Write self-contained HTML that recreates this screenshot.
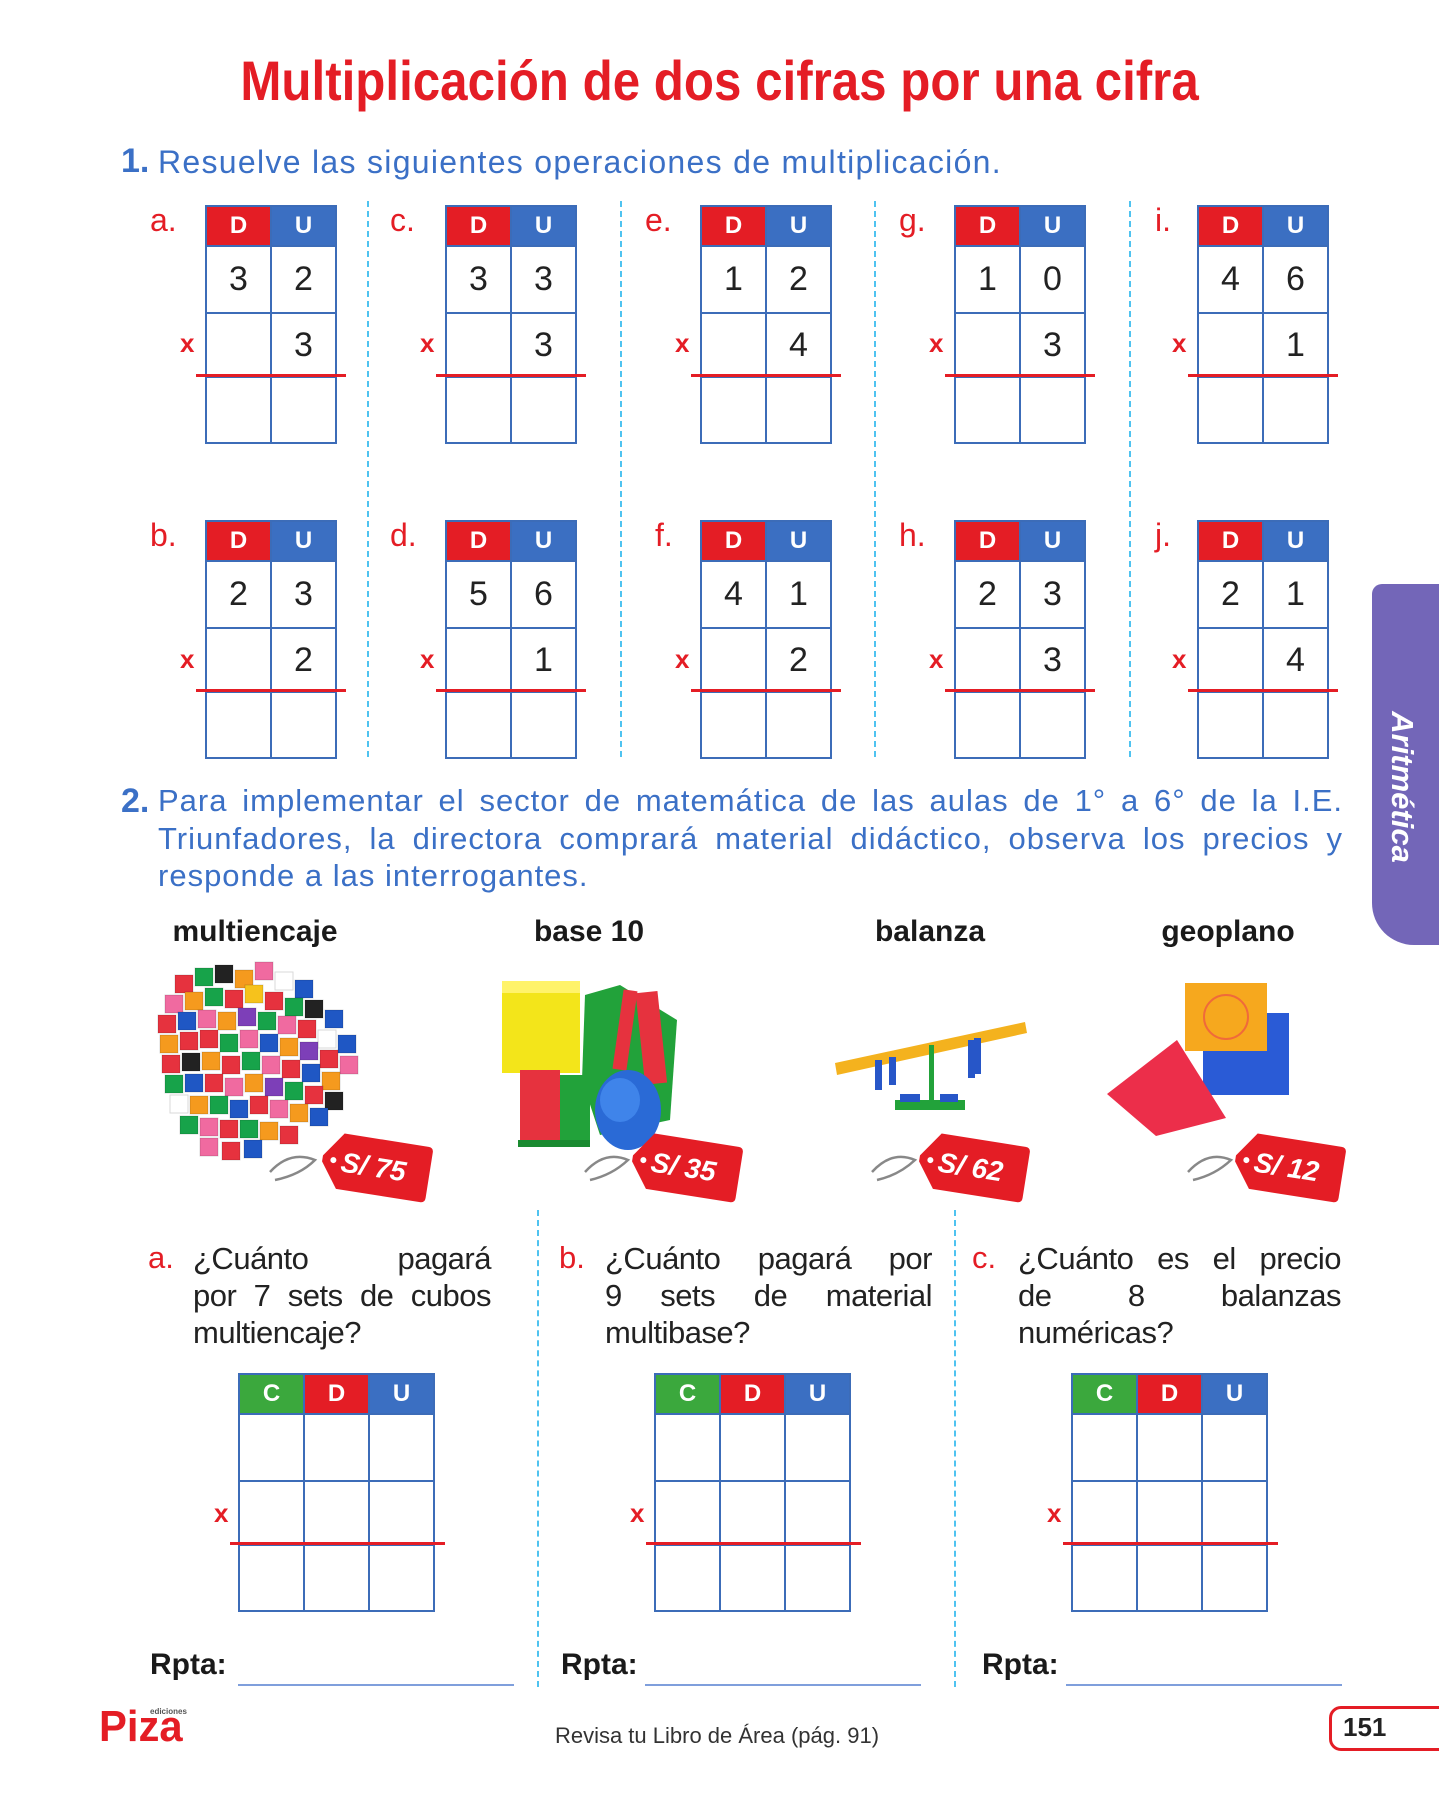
<!DOCTYPE html>
<html><head><meta charset="utf-8">
<style>
*{margin:0;padding:0;box-sizing:border-box}
body{width:1439px;height:1800px;background:#fff;position:relative;overflow:hidden;font-family:"Liberation Sans",sans-serif}
.a{position:absolute}
table.t{position:absolute;border-collapse:collapse;table-layout:fixed}
table.t th,table.t td{border:2px solid #3c6cb8;width:65px;text-align:center;padding:0}
table.t th{height:40px;color:#fff;font-weight:bold;font-size:24px}
table.t td{font-size:34px;color:#222}
table.t tr.r1 td{height:67px}
table.t tr.r2 td{height:64px}
table.t tr.r3 td{height:66px}
th.D{background:#e41d25}th.U{background:#3b6fc2}th.C{background:#3ba83d}
.rl{position:absolute;height:3px;background:#e41d25}
.lb{position:absolute;color:#e41d25;font-size:32px}
.xm{position:absolute;color:#e41d25;font-size:26px;font-weight:bold}
.sep{position:absolute;width:0;border-left:2px dashed #4fc3f0}
.p{position:absolute;color:#3b70c6;font-size:31px;letter-spacing:1px}
.q{position:absolute;color:#222;font-size:31px;letter-spacing:-0.5px;line-height:37px}
.j{text-align:justify;text-align-last:justify}
.pr{position:absolute;font-weight:bold;font-size:30px;color:#1a1a1a;transform:translateX(-50%)}
.rp{position:absolute;font-weight:bold;font-size:30px;color:#1a1a1a}
.ul{position:absolute;height:2px;background:#7f9fdc}
</style></head><body>

<div class="a" style="left:0;top:48px;width:1439px;text-align:center"><span style="display:inline-block;color:#e41d25;font-weight:bold;font-size:56px;transform:scaleX(0.88);white-space:nowrap">Multiplicación de dos cifras por una cifra</span></div>

<div class="a" style="left:121px;top:142px;color:#3b70c6;font-weight:bold;font-size:34px">1.</div>
<div class="a" style="left:158px;top:144px;color:#3b70c6;font-size:32px;letter-spacing:1.3px;white-space:nowrap">Resuelve las siguientes operaciones de multiplicación.</div>

<div class="sep" style="left:367px;top:201px;height:556px"></div>
<div class="sep" style="left:620px;top:201px;height:556px"></div>
<div class="sep" style="left:874px;top:201px;height:556px"></div>
<div class="sep" style="left:1129px;top:201px;height:556px"></div>

<!-- row 1 -->
<div class="lb" style="left:150px;top:202px">a.</div><div class="xm" style="left:180px;top:328px">x</div>
<table class="t" style="left:205px;top:205px"><tr><th class="D">D</th><th class="U">U</th></tr><tr class="r1"><td>3</td><td>2</td></tr><tr class="r2"><td></td><td>3</td></tr><tr class="r3"><td></td><td></td></tr></table>
<div class="rl" style="left:196px;top:374px;width:150px"></div>

<div class="lb" style="left:390px;top:202px">c.</div><div class="xm" style="left:420px;top:328px">x</div>
<table class="t" style="left:445px;top:205px"><tr><th class="D">D</th><th class="U">U</th></tr><tr class="r1"><td>3</td><td>3</td></tr><tr class="r2"><td></td><td>3</td></tr><tr class="r3"><td></td><td></td></tr></table>
<div class="rl" style="left:436px;top:374px;width:150px"></div>

<div class="lb" style="left:645px;top:202px">e.</div><div class="xm" style="left:675px;top:328px">x</div>
<table class="t" style="left:700px;top:205px"><tr><th class="D">D</th><th class="U">U</th></tr><tr class="r1"><td>1</td><td>2</td></tr><tr class="r2"><td></td><td>4</td></tr><tr class="r3"><td></td><td></td></tr></table>
<div class="rl" style="left:691px;top:374px;width:150px"></div>

<div class="lb" style="left:899px;top:202px">g.</div><div class="xm" style="left:929px;top:328px">x</div>
<table class="t" style="left:954px;top:205px"><tr><th class="D">D</th><th class="U">U</th></tr><tr class="r1"><td>1</td><td>0</td></tr><tr class="r2"><td></td><td>3</td></tr><tr class="r3"><td></td><td></td></tr></table>
<div class="rl" style="left:945px;top:374px;width:150px"></div>

<div class="lb" style="left:1155px;top:202px">i.</div><div class="xm" style="left:1172px;top:328px">x</div>
<table class="t" style="left:1197px;top:205px"><tr><th class="D">D</th><th class="U">U</th></tr><tr class="r1"><td>4</td><td>6</td></tr><tr class="r2"><td></td><td>1</td></tr><tr class="r3"><td></td><td></td></tr></table>
<div class="rl" style="left:1188px;top:374px;width:150px"></div>

<!-- row 2 -->
<div class="lb" style="left:150px;top:517px">b.</div><div class="xm" style="left:180px;top:644px">x</div>
<table class="t" style="left:205px;top:520px"><tr><th class="D">D</th><th class="U">U</th></tr><tr class="r1"><td>2</td><td>3</td></tr><tr class="r2"><td></td><td>2</td></tr><tr class="r3"><td></td><td></td></tr></table>
<div class="rl" style="left:196px;top:689px;width:150px"></div>

<div class="lb" style="left:390px;top:517px">d.</div><div class="xm" style="left:420px;top:644px">x</div>
<table class="t" style="left:445px;top:520px"><tr><th class="D">D</th><th class="U">U</th></tr><tr class="r1"><td>5</td><td>6</td></tr><tr class="r2"><td></td><td>1</td></tr><tr class="r3"><td></td><td></td></tr></table>
<div class="rl" style="left:436px;top:689px;width:150px"></div>

<div class="lb" style="left:655px;top:517px">f.</div><div class="xm" style="left:675px;top:644px">x</div>
<table class="t" style="left:700px;top:520px"><tr><th class="D">D</th><th class="U">U</th></tr><tr class="r1"><td>4</td><td>1</td></tr><tr class="r2"><td></td><td>2</td></tr><tr class="r3"><td></td><td></td></tr></table>
<div class="rl" style="left:691px;top:689px;width:150px"></div>

<div class="lb" style="left:899px;top:517px">h.</div><div class="xm" style="left:929px;top:644px">x</div>
<table class="t" style="left:954px;top:520px"><tr><th class="D">D</th><th class="U">U</th></tr><tr class="r1"><td>2</td><td>3</td></tr><tr class="r2"><td></td><td>3</td></tr><tr class="r3"><td></td><td></td></tr></table>
<div class="rl" style="left:945px;top:689px;width:150px"></div>

<div class="lb" style="left:1155px;top:517px">j.</div><div class="xm" style="left:1172px;top:644px">x</div>
<table class="t" style="left:1197px;top:520px"><tr><th class="D">D</th><th class="U">U</th></tr><tr class="r1"><td>2</td><td>1</td></tr><tr class="r2"><td></td><td>4</td></tr><tr class="r3"><td></td><td></td></tr></table>
<div class="rl" style="left:1188px;top:689px;width:150px"></div>

<!-- side tab -->
<div class="a" style="left:1372px;top:584px;width:80px;height:361px;background:#7366b8;border-radius:10px 0 0 42px"></div>
<div class="a" style="left:1402px;top:787px;transform:translate(-50%,-50%) rotate(90deg);color:#fff;font-weight:bold;font-style:italic;font-size:31px;white-space:nowrap">Aritmética</div>

<!-- section 2 -->
<div class="a" style="left:121px;top:782px;color:#3b70c6;font-weight:bold;font-size:34px">2.</div>
<div class="p j" style="left:158px;top:783px;width:1185px">Para implementar el sector de matemática de las aulas de 1° a 6° de la I.E.</div>
<div class="p j" style="left:158px;top:821px;width:1185px">Triunfadores, la directora comprará material didáctico, observa los precios y</div>
<div class="p" style="left:158px;top:858px">responde a las interrogantes.</div>

<div class="pr" style="left:255px;top:915px">multiencaje</div>
<div class="pr" style="left:589px;top:915px">base 10</div>
<div class="pr" style="left:930px;top:915px">balanza</div>
<div class="pr" style="left:1228px;top:915px">geoplano</div>

<svg class="a" style="left:0;top:0" width="1439" height="1800" viewBox="0 0 1439 1800">
<g stroke="rgba(0,0,0,0.15)" stroke-width="1">
<rect x="175" y="975" width="18" height="18" fill="#e6323e"/><rect x="195" y="968" width="18" height="18" fill="#17a34a"/><rect x="215" y="965" width="18" height="18" fill="#222"/><rect x="235" y="970" width="18" height="18" fill="#f59a1e"/><rect x="255" y="962" width="18" height="18" fill="#f06aa0"/><rect x="275" y="972" width="18" height="18" fill="#fff"/><rect x="295" y="980" width="18" height="18" fill="#1f57c4"/>
<rect x="165" y="995" width="18" height="18" fill="#f06aa0"/><rect x="185" y="992" width="18" height="18" fill="#f59a1e"/><rect x="205" y="988" width="18" height="18" fill="#17a34a"/><rect x="225" y="990" width="18" height="18" fill="#e6323e"/><rect x="245" y="985" width="18" height="18" fill="#f6c21c"/><rect x="265" y="992" width="18" height="18" fill="#e6323e"/><rect x="285" y="998" width="18" height="18" fill="#17a34a"/><rect x="305" y="1000" width="18" height="18" fill="#222"/><rect x="325" y="1010" width="18" height="18" fill="#1f57c4"/>
<rect x="158" y="1015" width="18" height="18" fill="#e6323e"/><rect x="178" y="1012" width="18" height="18" fill="#1f57c4"/><rect x="198" y="1010" width="18" height="18" fill="#f06aa0"/><rect x="218" y="1012" width="18" height="18" fill="#f59a1e"/><rect x="238" y="1008" width="18" height="18" fill="#7d3fb8"/><rect x="258" y="1012" width="18" height="18" fill="#17a34a"/><rect x="278" y="1016" width="18" height="18" fill="#f06aa0"/><rect x="298" y="1020" width="18" height="18" fill="#e6323e"/><rect x="318" y="1030" width="18" height="18" fill="#fff"/><rect x="338" y="1035" width="18" height="18" fill="#1f57c4"/>
<rect x="160" y="1035" width="18" height="18" fill="#f59a1e"/><rect x="180" y="1032" width="18" height="18" fill="#e6323e"/><rect x="200" y="1030" width="18" height="18" fill="#e6323e"/><rect x="220" y="1034" width="18" height="18" fill="#17a34a"/><rect x="240" y="1030" width="18" height="18" fill="#f06aa0"/><rect x="260" y="1034" width="18" height="18" fill="#1f57c4"/><rect x="280" y="1038" width="18" height="18" fill="#f59a1e"/><rect x="300" y="1042" width="18" height="18" fill="#7d3fb8"/><rect x="320" y="1050" width="18" height="18" fill="#e6323e"/><rect x="340" y="1056" width="18" height="18" fill="#f06aa0"/>
<rect x="162" y="1055" width="18" height="18" fill="#e6323e"/><rect x="182" y="1053" width="18" height="18" fill="#222"/><rect x="202" y="1052" width="18" height="18" fill="#f59a1e"/><rect x="222" y="1056" width="18" height="18" fill="#e6323e"/><rect x="242" y="1052" width="18" height="18" fill="#17a34a"/><rect x="262" y="1056" width="18" height="18" fill="#f06aa0"/><rect x="282" y="1060" width="18" height="18" fill="#e6323e"/><rect x="302" y="1064" width="18" height="18" fill="#1f57c4"/><rect x="322" y="1072" width="18" height="18" fill="#f59a1e"/>
<rect x="165" y="1075" width="18" height="18" fill="#17a34a"/><rect x="185" y="1074" width="18" height="18" fill="#1f57c4"/><rect x="205" y="1074" width="18" height="18" fill="#e6323e"/><rect x="225" y="1078" width="18" height="18" fill="#f06aa0"/><rect x="245" y="1074" width="18" height="18" fill="#f59a1e"/><rect x="265" y="1078" width="18" height="18" fill="#7d3fb8"/><rect x="285" y="1082" width="18" height="18" fill="#17a34a"/><rect x="305" y="1086" width="18" height="18" fill="#e6323e"/><rect x="325" y="1092" width="18" height="18" fill="#222"/>
<rect x="170" y="1095" width="18" height="18" fill="#fff"/><rect x="190" y="1096" width="18" height="18" fill="#f59a1e"/><rect x="210" y="1096" width="18" height="18" fill="#17a34a"/><rect x="230" y="1100" width="18" height="18" fill="#1f57c4"/><rect x="250" y="1096" width="18" height="18" fill="#e6323e"/><rect x="270" y="1100" width="18" height="18" fill="#f06aa0"/><rect x="290" y="1104" width="18" height="18" fill="#f59a1e"/><rect x="310" y="1108" width="18" height="18" fill="#1f57c4"/>
<rect x="180" y="1116" width="18" height="18" fill="#17a34a"/><rect x="200" y="1118" width="18" height="18" fill="#f06aa0"/><rect x="220" y="1120" width="18" height="18" fill="#e6323e"/><rect x="240" y="1120" width="18" height="18" fill="#17a34a"/><rect x="260" y="1122" width="18" height="18" fill="#f59a1e"/><rect x="280" y="1126" width="18" height="18" fill="#e6323e"/>
<rect x="200" y="1138" width="18" height="18" fill="#f06aa0"/><rect x="222" y="1142" width="18" height="18" fill="#e6323e"/><rect x="244" y="1140" width="18" height="18" fill="#1f57c4"/>
</g>
<rect x="502" y="981" width="78" height="92" fill="#f3e51a"/><rect x="502" y="981" width="78" height="12" fill="#fff36a"/>
<polygon points="585,995 620,985 677,1020 670,1120 600,1135 582,1080" fill="#22a23a"/>
<rect x="618" y="990" width="14" height="80" fill="#e6323e" transform="rotate(8 625 1030)"/><rect x="640" y="992" width="22" height="92" fill="#e6323e" transform="rotate(-6 650 1035)"/>
<rect x="520" y="1070" width="40" height="75" fill="#e6323e"/><rect x="560" y="1075" width="30" height="72" fill="#22a23a"/><rect x="518" y="1140" width="72" height="7" fill="#1a8a30"/>
<ellipse cx="628" cy="1110" rx="33" ry="40" fill="#2a6ad6"/><ellipse cx="620" cy="1100" rx="20" ry="22" fill="#3f84ea"/>
<polygon points="835,1063 1025,1022 1027,1033 837,1075" fill="#f4b21e"/>
<rect x="875" y="1060" width="7" height="30" fill="#2756c8"/><rect x="889" y="1057" width="7" height="28" fill="#2756c8"/><rect x="968" y="1040" width="7" height="38" fill="#2756c8"/><rect x="974" y="1038" width="7" height="36" fill="#2756c8"/>
<rect x="929" y="1045" width="5" height="60" fill="#22a23a"/><rect x="895" y="1100" width="70" height="10" fill="#22a23a"/><rect x="900" y="1094" width="20" height="8" fill="#2756c8"/><rect x="940" y="1094" width="18" height="8" fill="#2756c8"/>
<rect x="1203" y="1013" width="86" height="82" fill="#2a5bd6"/>
<polygon points="1107,1094 1177,1040 1226,1118 1156,1136" fill="#ec2e4a"/>
<rect x="1185" y="983" width="82" height="68" fill="#f6a81e"/><circle cx="1226" cy="1017" r="22" fill="none" stroke="#f06a3a" stroke-width="2"/>
<g font-family="Liberation Sans, sans-serif" font-weight="bold" font-style="italic" font-size="28" fill="#fff">
<g transform="rotate(9 377 1166)"><path d="M340,1139 L425,1139 Q430,1139 430,1144 L430,1190 Q430,1195 425,1195 L340,1195 L322,1170 L322,1164 Z" fill="#e41d25"/><circle cx="333" cy="1167" r="3" fill="#fff"/><text x="341" y="1177">S/ 75</text></g>
<path d="M270,1172 Q290,1150 315,1160 Q300,1175 275,1180" stroke="#888" stroke-width="2.5" fill="none"/>
<g transform="rotate(9 687 1166)"><path d="M650,1139 L735,1139 Q740,1139 740,1144 L740,1190 Q740,1195 735,1195 L650,1195 L632,1170 L632,1164 Z" fill="#e41d25"/><circle cx="643" cy="1167" r="3" fill="#fff"/><text x="651" y="1177">S/ 35</text></g>
<path d="M585,1172 Q605,1150 628,1160 Q612,1175 590,1180" stroke="#888" stroke-width="2.5" fill="none"/>
<g transform="rotate(9 974 1166)"><path d="M937,1139 L1022,1139 Q1027,1139 1027,1144 L1027,1190 Q1027,1195 1022,1195 L937,1195 L919,1170 L919,1164 Z" fill="#e41d25"/><circle cx="930" cy="1167" r="3" fill="#fff"/><text x="938" y="1177">S/ 62</text></g>
<path d="M872,1172 Q892,1150 915,1160 Q899,1175 877,1180" stroke="#888" stroke-width="2.5" fill="none"/>
<g transform="rotate(9 1290 1166)"><path d="M1253,1139 L1338,1139 Q1343,1139 1343,1144 L1343,1190 Q1343,1195 1338,1195 L1253,1195 L1235,1170 L1235,1164 Z" fill="#e41d25"/><circle cx="1246" cy="1167" r="3" fill="#fff"/><text x="1254" y="1177">S/ 12</text></g>
<path d="M1188,1172 Q1208,1150 1231,1160 Q1215,1175 1193,1180" stroke="#888" stroke-width="2.5" fill="none"/>
</g>
</svg>

<div class="sep" style="left:537px;top:1210px;height:477px"></div>
<div class="sep" style="left:954px;top:1210px;height:477px"></div>

<div class="lb" style="left:148px;top:1240px;font-size:31px">a.</div>
<div class="q" style="left:193px;top:1240px;width:298px"><div class="j">¿Cuánto pagará</div><div class="j">por 7 sets de cubos</div><div>multiencaje?</div></div>
<div class="lb" style="left:559px;top:1240px;font-size:31px">b.</div>
<div class="q" style="left:605px;top:1240px;width:327px"><div class="j">¿Cuánto pagará por</div><div class="j">9 sets de material</div><div>multibase?</div></div>
<div class="lb" style="left:972px;top:1240px;font-size:31px">c.</div>
<div class="q" style="left:1018px;top:1240px;width:323px"><div class="j">¿Cuánto es el precio</div><div class="j">de 8 balanzas</div><div>numéricas?</div></div>

<table class="t" style="left:238px;top:1373px"><tr><th class="C">C</th><th class="D">D</th><th class="U">U</th></tr><tr class="r1"><td></td><td></td><td></td></tr><tr class="r2"><td></td><td></td><td></td></tr><tr class="r3"><td></td><td></td><td></td></tr></table>
<div class="xm" style="left:214px;top:1498px">x</div><div class="rl" style="left:230px;top:1542px;width:215px"></div>
<table class="t" style="left:654px;top:1373px"><tr><th class="C">C</th><th class="D">D</th><th class="U">U</th></tr><tr class="r1"><td></td><td></td><td></td></tr><tr class="r2"><td></td><td></td><td></td></tr><tr class="r3"><td></td><td></td><td></td></tr></table>
<div class="xm" style="left:630px;top:1498px">x</div><div class="rl" style="left:646px;top:1542px;width:215px"></div>
<table class="t" style="left:1071px;top:1373px"><tr><th class="C">C</th><th class="D">D</th><th class="U">U</th></tr><tr class="r1"><td></td><td></td><td></td></tr><tr class="r2"><td></td><td></td><td></td></tr><tr class="r3"><td></td><td></td><td></td></tr></table>
<div class="xm" style="left:1047px;top:1498px">x</div><div class="rl" style="left:1063px;top:1542px;width:215px"></div>

<div class="rp" style="left:150px;top:1648px">Rpta:</div><div class="ul" style="left:238px;top:1684px;width:276px"></div>
<div class="rp" style="left:561px;top:1648px">Rpta:</div><div class="ul" style="left:645px;top:1684px;width:276px"></div>
<div class="rp" style="left:982px;top:1648px">Rpta:</div><div class="ul" style="left:1066px;top:1684px;width:276px"></div>

<div class="a" style="left:150px;top:1707px;font-size:8px;color:#555;font-weight:bold">ediciones</div>
<div class="a" style="left:99px;top:1704px;color:#e41d25;font-weight:bold;font-size:44px;line-height:46px;transform:scaleX(0.95);transform-origin:left">Piza</div>
<div class="a" style="left:0;top:1723px;width:1434px;text-align:center;font-size:22px;color:#333">Revisa tu Libro de Área (pág. 91)</div>
<div class="a" style="left:1329px;top:1706px;width:130px;height:45px;border:3px solid #e41d25;border-radius:12px"></div>
<div class="a" style="left:1343px;top:1712px;font-weight:bold;font-size:26px;color:#222">151</div>
</body></html>
